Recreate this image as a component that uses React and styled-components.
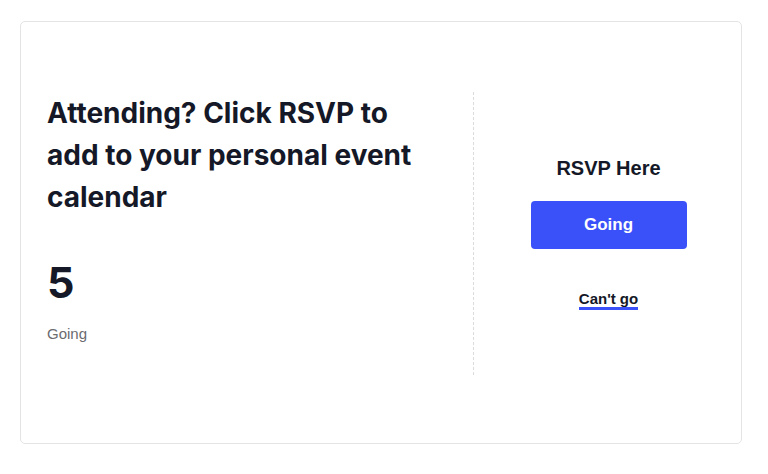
import React from "react";
import styled, { createGlobalStyle } from "styled-components";

const Global = createGlobalStyle`
  html, body { margin: 0; padding: 0; background: #fff; }
  body { font-family: "Liberation Sans", Arial, sans-serif; color: #141827; }
`;

const Page = styled.div`
  padding: 21px 26px 0 20px;
`;

const Card = styled.div`
  box-sizing: border-box;
  width: 722px;
  height: 423px;
  border: 1px solid #e4e4e7;
  border-radius: 5px;
  padding: 70px 0 68px 26px;
  display: grid;
  grid-template-columns: 426px 1fr;
`;

const Left = styled.div`
  display: flex;
  flex-direction: column;
`;

const Heading = styled.h2`
  margin: 0;
  max-width: 385px;
  font-family: Inter, "Liberation Sans", sans-serif;
  font-size: 28px;
  line-height: 42px;
  font-weight: 700;
  color: #141827;
`;

const Count = styled.div`
  margin-top: 40px;
  font-family: Inter, "Liberation Sans", sans-serif;
  font-size: 43px;
  line-height: 48px;
  font-weight: 700;
  color: #141827;
`;

const CountLabel = styled.div`
  margin-top: 18px;
  font-size: 15px;
  line-height: 20px;
  color: #6b6b70;
`;

const Right = styled.div`
  border-left: 1px dashed #dcdcdf;
  display: flex;
  flex-direction: column;
  align-items: center;
  justify-content: center;
  padding-left: 2px;
  padding-bottom: 2px;
`;

const RsvpTitle = styled.div`
  font-size: 20px;
  line-height: 24px;
  font-weight: 700;
  color: #141827;
`;

const GoingButton = styled.button`
  margin-top: 21px;
  width: 156px;
  height: 48px;
  border: none;
  border-radius: 4px;
  background: #3a50f8;
  color: #fff;
  font-family: inherit;
  font-size: 17px;
  font-weight: 700;
  cursor: pointer;
`;

const CantGo = styled.a`
  margin-top: 41px;
  font-size: 15px;
  line-height: 17px;
  font-weight: 700;
  color: #141827;
  text-decoration: none;
  border-bottom: 3px solid #3a50f8;
  cursor: pointer;
`;

export default function App() {
  return (
    <>
      <Global />
      <Page>
        <Card>
          <Left>
            <Heading>Attending? Click RSVP to add to your personal event calendar</Heading>
            <Count>5</Count>
            <CountLabel>Going</CountLabel>
          </Left>
          <Right>
            <RsvpTitle>RSVP Here</RsvpTitle>
            <GoingButton>Going</GoingButton>
            <CantGo>Can't go</CantGo>
          </Right>
        </Card>
      </Page>
    </>
  );
}
